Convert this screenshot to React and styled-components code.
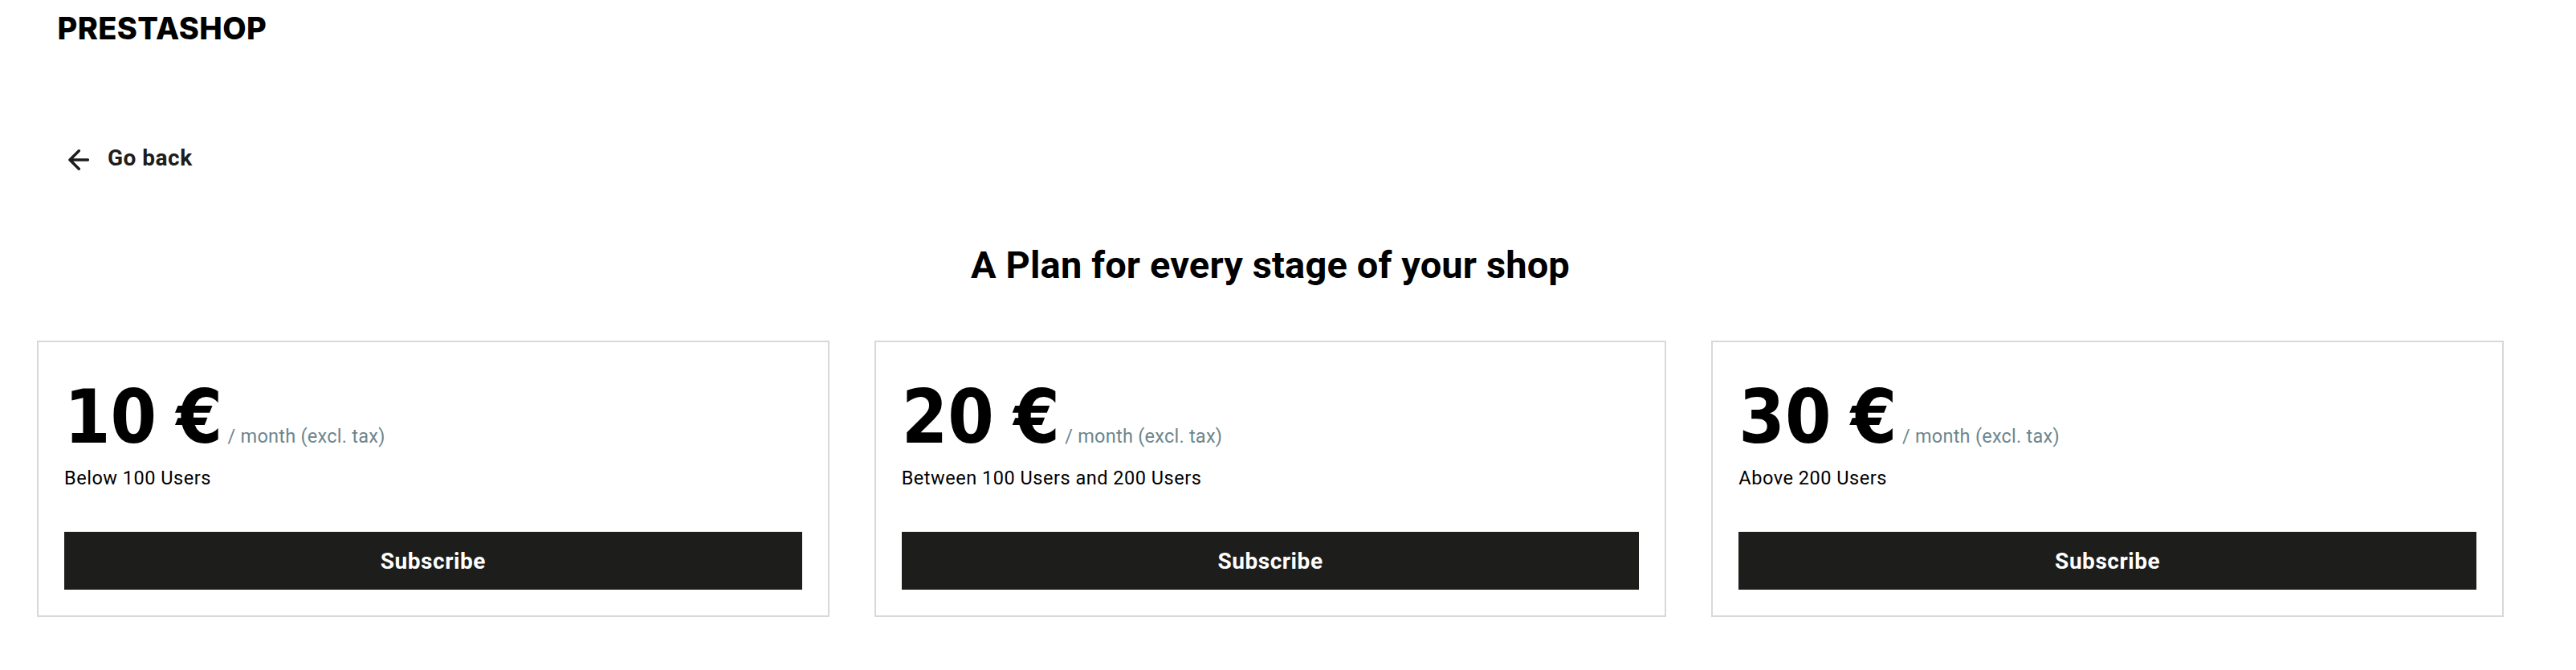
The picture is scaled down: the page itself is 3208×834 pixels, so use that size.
import React from 'react';
import styled, { createGlobalStyle } from 'styled-components';

const GlobalStyle = createGlobalStyle`
  *, *::before, *::after { box-sizing: border-box; }
  body {
    margin: 0;
    background: #fff;
    color: #000;
    font-family: Roboto, 'Liberation Sans', sans-serif;
  }
`;

const Page = styled.div`
  min-height: 834px;
`;

const Header = styled.header`
  height: 70px;
  padding-left: 71.5px;
`;

const Brand = styled.div`
  font: 800 38px/70px Inter, sans-serif;
  letter-spacing: 0.4px;
`;

const Main = styled.main`
  padding: 96px 90px 0 46px;
`;

const BackLink = styled.a`
  display: inline-flex;
  align-items: center;
  gap: 23px;
  height: 60px;
  margin-left: 39px;
  color: #1d1d1b;
  font-size: 28px;
  font-weight: 700;
  letter-spacing: 0.5px;
  cursor: pointer;
`;

const BackIcon = styled.svg`
  width: 26px;
  height: 26px;
  margin-top: 6px;
  fill: none;
  stroke: currentColor;
  stroke-width: 3.5;
  stroke-linecap: round;
  stroke-linejoin: round;
`;

const Title = styled.h1`
  margin: 74px 0 64px;
  font-size: 47px;
  font-weight: 700;
  line-height: 60px;
  letter-spacing: 0.14px;
  text-align: center;
`;

const Plans = styled.section`
  display: grid;
  grid-template-columns: repeat(3, 1fr);
  gap: 56px;
`;

const Card = styled.article`
  display: flex;
  flex-direction: column;
  padding: 32px;
  border: 2px solid #d8d8d8;
`;

const PriceRow = styled.div`
  display: flex;
  align-items: baseline;
  gap: 6.5px;
  height: 122px;
`;

const Price = styled.span`
  font: 700 92px/124px 'DejaVu Sans Condensed', 'DejaVu Sans', sans-serif;
  font-stretch: condensed;
  word-spacing: -4.5px;
  white-space: nowrap;
`;

const Period = styled.span`
  color: #6c868e;
  font-size: 23.5px;
  line-height: 30px;
  letter-spacing: 0.25px;
`;

const Range = styled.div`
  font-size: 23.5px;
  line-height: 30px;
  letter-spacing: 0.52px;
`;

const SubscribeButton = styled.button`
  height: 72px;
  margin-top: 52px;
  padding: 0;
  border: 0;
  background: #1d1d1b;
  color: #fff;
  font: 700 28px/73px Roboto, 'Liberation Sans', sans-serif;
  letter-spacing: 0.55px;
  cursor: pointer;
`;

const plans = [
  { price: '10 €', range: 'Below 100 Users' },
  { price: '20 €', range: 'Between 100 Users and 200 Users' },
  { price: '30 €', range: 'Above 200 Users' },
];

export default function App() {
  return (
    <Page>
      <GlobalStyle />
      <Header>
        <Brand>PRESTASHOP</Brand>
      </Header>
      <Main>
        <BackLink>
          <BackIcon viewBox="0 0 26 26" aria-hidden="true">
            <path d="M24.4 13H2M13.3 1.8 2 13l11.3 11.2" />
          </BackIcon>
          Go back
        </BackLink>
        <Title>A Plan for every stage of your shop</Title>
        <Plans>
          {plans.map((plan) => (
            <Card key={plan.price}>
              <PriceRow>
                <Price>{plan.price}</Price>
                <Period>/ month (excl. tax)</Period>
              </PriceRow>
              <Range>{plan.range}</Range>
              <SubscribeButton type="button">Subscribe</SubscribeButton>
            </Card>
          ))}
        </Plans>
      </Main>
    </Page>
  );
}
